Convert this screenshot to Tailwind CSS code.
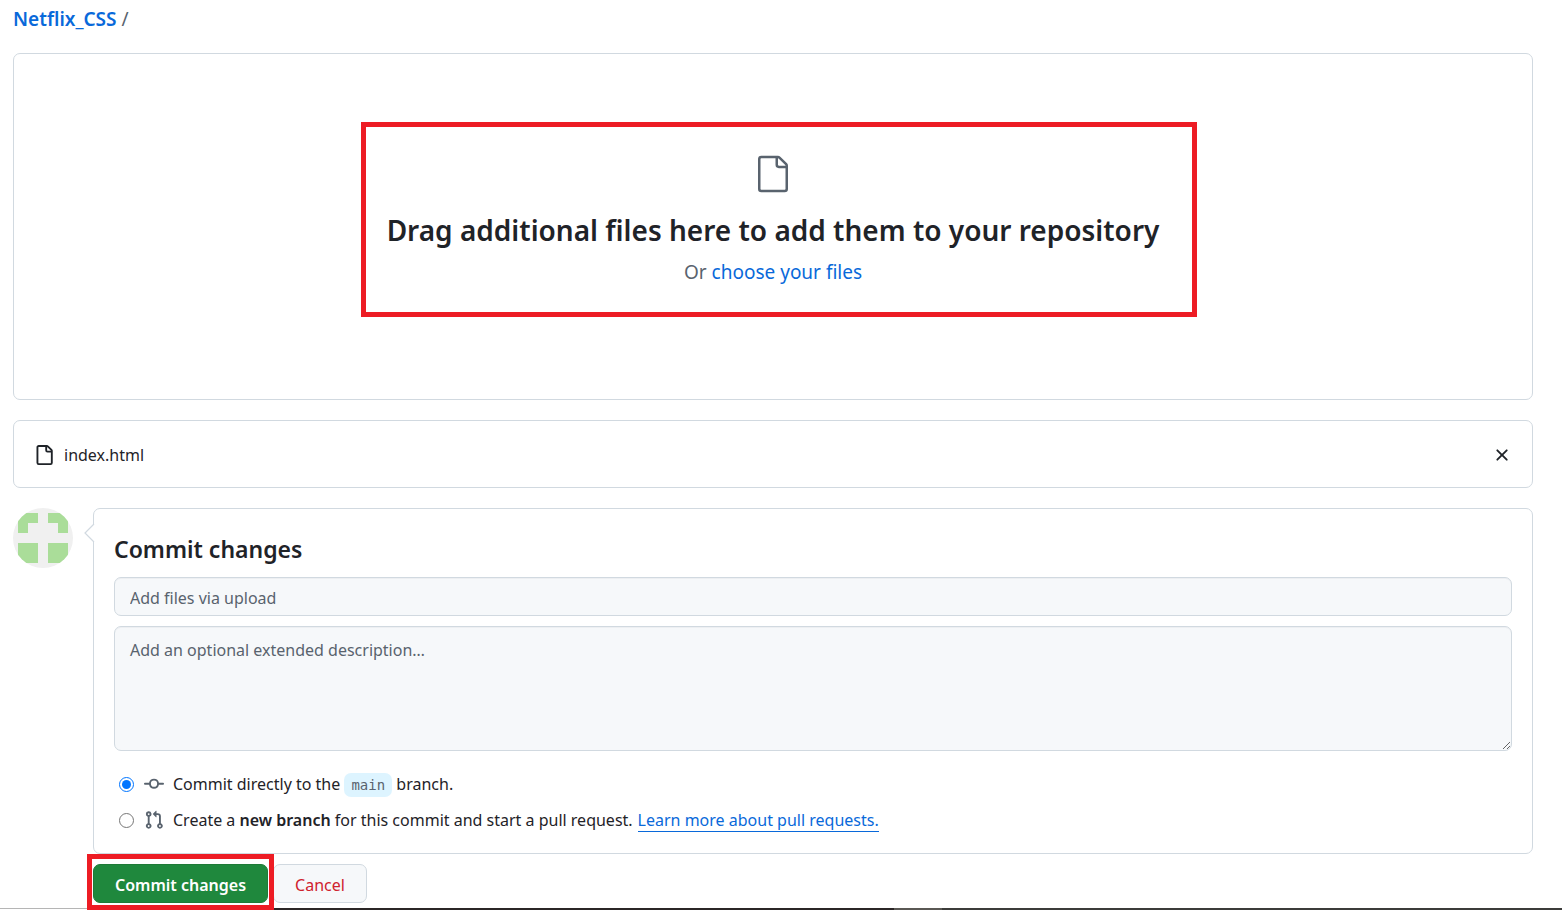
<!DOCTYPE html>
<html lang="en">

<head>
    <meta charset="UTF-8">
    <meta name="viewport" content="width=device-width, initial-scale=1.0">
    <title>Upload files - Netflix_CSS</title>
    <script src="https://cdn.jsdelivr.net/npm/@tailwindcss/browser@4"></script>
</head>

<body class="bg-white font-['Noto_Sans','Open_Sans',sans-serif] text-[16px] leading-[26px] text-[#1f2328]">

    <main class="min-h-screen pl-[13px] pr-[29px] pt-[6px]">
        <nav class="text-[19px]">
            <a href="#" class="font-semibold text-[#0969da]">Netflix_CSS</a>
            <span class="text-[#59636e]">/</span>
        </nav>

        <!-- drop zone -->
        <section class="relative mt-[21px] h-[347px] rounded-[7px] border border-[#d1d9e0] pt-[100px] text-center">
            <svg class="mx-auto size-10 fill-[#59636e]" viewBox="0 0 24 24" aria-hidden="true">
                <path d="M3 3a2 2 0 0 1 2-2h9.982a2 2 0 0 1 1.414.586l4.018 4.018A2 2 0 0 1 21 7.018V21a2 2 0 0 1-2 2H5a2 2 0 0 1-2-2Zm2-.5a.5.5 0 0 0-.5.5v18a.5.5 0 0 0 .5.5h14a.5.5 0 0 0 .5-.5V8.5h-4a2 2 0 0 1-2-2v-4Zm10 0v4a.5.5 0 0 0 .5.5h4a.5.5 0 0 0-.146-.336l-4.018-4.018A.5.5 0 0 0 15 2.5Z" />
            </svg>
            <h1 class="mt-[14px] text-[28px] leading-[44px] font-semibold">Drag additional files here to add them to your repository</h1>
            <p class="mt-[7px] text-[19px] text-[#59636e]">Or <a href="#" class="text-[#0969da]">choose your files</a></p>
            <div class="pointer-events-none absolute top-[68px] left-1/2 h-[195px] w-[836px] -translate-x-[412px] border-5 border-[#ed1c24]"></div>
        </section>

        <!-- uploaded files -->
        <section class="mt-5 flex h-[68px] items-center rounded-[7px] border border-[#d1d9e0] px-5 pt-[2px]">
            <svg class="size-5" viewBox="0 0 16 16" fill="currentColor" aria-hidden="true">
                <path d="M2 1.75C2 .784 2.784 0 3.75 0h6.586c.464 0 .909.184 1.237.513l2.914 2.914c.329.328.513.773.513 1.237v9.586A1.75 1.75 0 0 1 13.25 16h-9.5A1.75 1.75 0 0 1 2 14.25Zm1.75-.25a.25.25 0 0 0-.25.25v12.5c0 .138.112.25.25.25h9.5a.25.25 0 0 0 .25-.25V6h-2.75A1.75 1.75 0 0 1 9 4.25V1.5Zm6.75.062V4.25c0 .138.112.25.25.25h2.688l-.011-.013-2.914-2.914-.013-.011Z" />
            </svg>
            <span class="ml-[10px]">index.html</span>
            <button type="button" aria-label="Remove this file" class="ml-auto">
                <svg class="size-5" viewBox="0 0 16 16" fill="currentColor" aria-hidden="true">
                    <path d="M3.72 3.72a.75.75 0 0 1 1.06 0L8 6.94l3.22-3.22a.749.749 0 0 1 1.275.326.749.749 0 0 1-.215.734L9.06 8l3.22 3.22a.749.749 0 0 1-.326 1.275.749.749 0 0 1-.734-.215L8 9.06l-3.22 3.22a.751.751 0 0 1-1.042-.018.751.751 0 0 1-.018-1.042L6.94 8 3.72 4.78a.75.75 0 0 1 0-1.06Z" />
                </svg>
            </button>
        </section>

        <form class="mt-5 flex items-start gap-5 pb-[7px]" onsubmit="return false;">
            <svg class="size-[60px] shrink-0" viewBox="0 0 60 60" role="img" aria-label="Your avatar">
                <clipPath id="avatar-clip">
                    <circle cx="30" cy="30" r="30" />
                </clipPath>
                <g clip-path="url(#avatar-clip)">
                    <path fill="#f0f0f0" d="M0 0h60v60H0z" />
                    <path fill="#aadd99" d="M5 5h20v10H15v10H5zM35 5h20v20H45V15H35zM5 35h20v20H5zM35 35h20v20H35z" />
                </g>
            </svg>

            <div class="min-w-0 flex-1">
                <div class="relative rounded-[7px] border border-[#d1d9e0] p-5">
                    <svg class="absolute top-[14px] -left-[10px] h-5 w-[11px]" viewBox="0 0 11 20" aria-hidden="true">
                        <path fill="#fff" d="M11 0 1 10l10 10z" />
                        <path fill="none" stroke="#d1d9e0" stroke-width="1.2" d="M10 1 1 10l9 9" />
                    </svg>

                    <h2 class="text-[23px] leading-[40px] font-semibold">Commit changes</h2>

                    <input id="commit-summary" type="text" aria-label="Commit summary" placeholder="Add files via upload"
                        class="mt-2 block h-[39px] w-full rounded-[7px] border border-[#d1d9e0] bg-[#f6f8fa] px-[15px] pt-[2px] shadow-[inset_0_1px_0_#1f23280a] placeholder:text-[#59636e]">

                    <textarea id="commit-description" aria-label="Optional extended description" placeholder="Add an optional extended description…"
                        class="mt-[10px] block h-[125px] w-full resize-y rounded-[7px] border border-[#d1d9e0] bg-[#f6f8fa] px-[15px] py-[10px] shadow-[inset_0_1px_0_#1f23280a] placeholder:text-[#59636e]"></textarea>

                    <div class="mt-5 flex h-[26px] items-center pl-[5px]">
                        <input id="commit-direct" name="commit-choice" type="radio" checked class="size-[15px] accent-[#0075ff]">
                        <label for="commit-direct" class="flex items-center">
                            <svg class="mr-[9px] ml-[10px] size-5 fill-[#59636e]" viewBox="0 0 16 16" aria-hidden="true">
                                <path d="M11.93 8.5a4.002 4.002 0 0 1-7.86 0H.75a.75.75 0 0 1 0-1.5h3.32a4.002 4.002 0 0 1 7.86 0h3.32a.75.75 0 0 1 0 1.5Zm-1.43-.75a2.5 2.5 0 1 0-5 0 2.5 2.5 0 0 0 5 0Z" />
                            </svg>
                            <span>Commit directly to the <code class="rounded-[7px] bg-[#ddf4ff] px-[7px] py-1 font-['DejaVu_Sans_Mono',monospace] text-[14px] text-[#59636e]">main</code> branch.</span>
                        </label>
                    </div>
                    <div class="mt-[10px] flex h-[26px] items-center pl-[5px]">
                        <input id="commit-branch" name="commit-choice" type="radio" class="size-[15px] accent-[#0075ff]">
                        <label for="commit-branch" class="flex items-center">
                            <svg class="mr-[9px] ml-[10px] size-5 fill-[#59636e]" viewBox="0 0 16 16" aria-hidden="true">
                                <path d="M1.5 3.25a2.25 2.25 0 1 1 3 2.122v5.256a2.251 2.251 0 1 1-1.5 0V5.372A2.25 2.25 0 0 1 1.5 3.25Zm5.677-.177L9.573.677A.25.25 0 0 1 10 .854V2.5h1A2.5 2.5 0 0 1 13.5 5v5.628a2.251 2.251 0 1 1-1.5 0V5a1 1 0 0 0-1-1h-1v1.646a.25.25 0 0 1-.427.177L7.177 3.427a.25.25 0 0 1 0-.354ZM3.75 2.5a.75.75 0 1 0 0 1.5.75.75 0 0 0 0-1.5Zm0 9.5a.75.75 0 1 0 0 1.5.75.75 0 0 0 0-1.5Zm8.25.75a.75.75 0 1 0 1.5 0 .75.75 0 0 0-1.5 0Z" />
                            </svg>
                            <span>Create a <strong class="font-semibold">new branch</strong> for this commit and start a pull request.</span>
                        </label>
                        <a href="#" class="ml-[5px] border-b border-[#0969da] leading-[22px] text-[#0969da]">Learn more about pull requests.</a>
                    </div>
                </div>

                <div class="mt-[10px] flex gap-[5px]">
                    <div class="relative">
                        <button type="submit" class="h-[39px] w-[175px] rounded-[7px] border border-[#1f7a37] bg-[#1f883d] pt-[2px] font-semibold whitespace-nowrap text-white">Commit changes</button>
                        <div class="pointer-events-none absolute -inset-x-[6px] -top-[10px] z-10 h-14 border-5 border-[#ed1c24]"></div>
                    </div>
                    <button type="button" class="h-[39px] w-[94px] rounded-[7px] border border-[#d1d9e0] bg-[#f6f8fa] pt-[2px] text-[#cf222e]">Cancel</button>
                </div>
            </div>
        </form>
    </main>

    <!-- bottom window edge -->
    <div class="fixed inset-x-0 bottom-0 flex h-[2px]">
        <div class="w-[87px] border-t border-[#b5b5b5]"></div>
        <div class="w-[807px] bg-[#2b2626]"></div>
        <div class="w-12 bg-[#5a5854]"></div>
        <div class="flex-1 bg-[#3c3c3a]"></div>
    </div>

</body>

</html>
